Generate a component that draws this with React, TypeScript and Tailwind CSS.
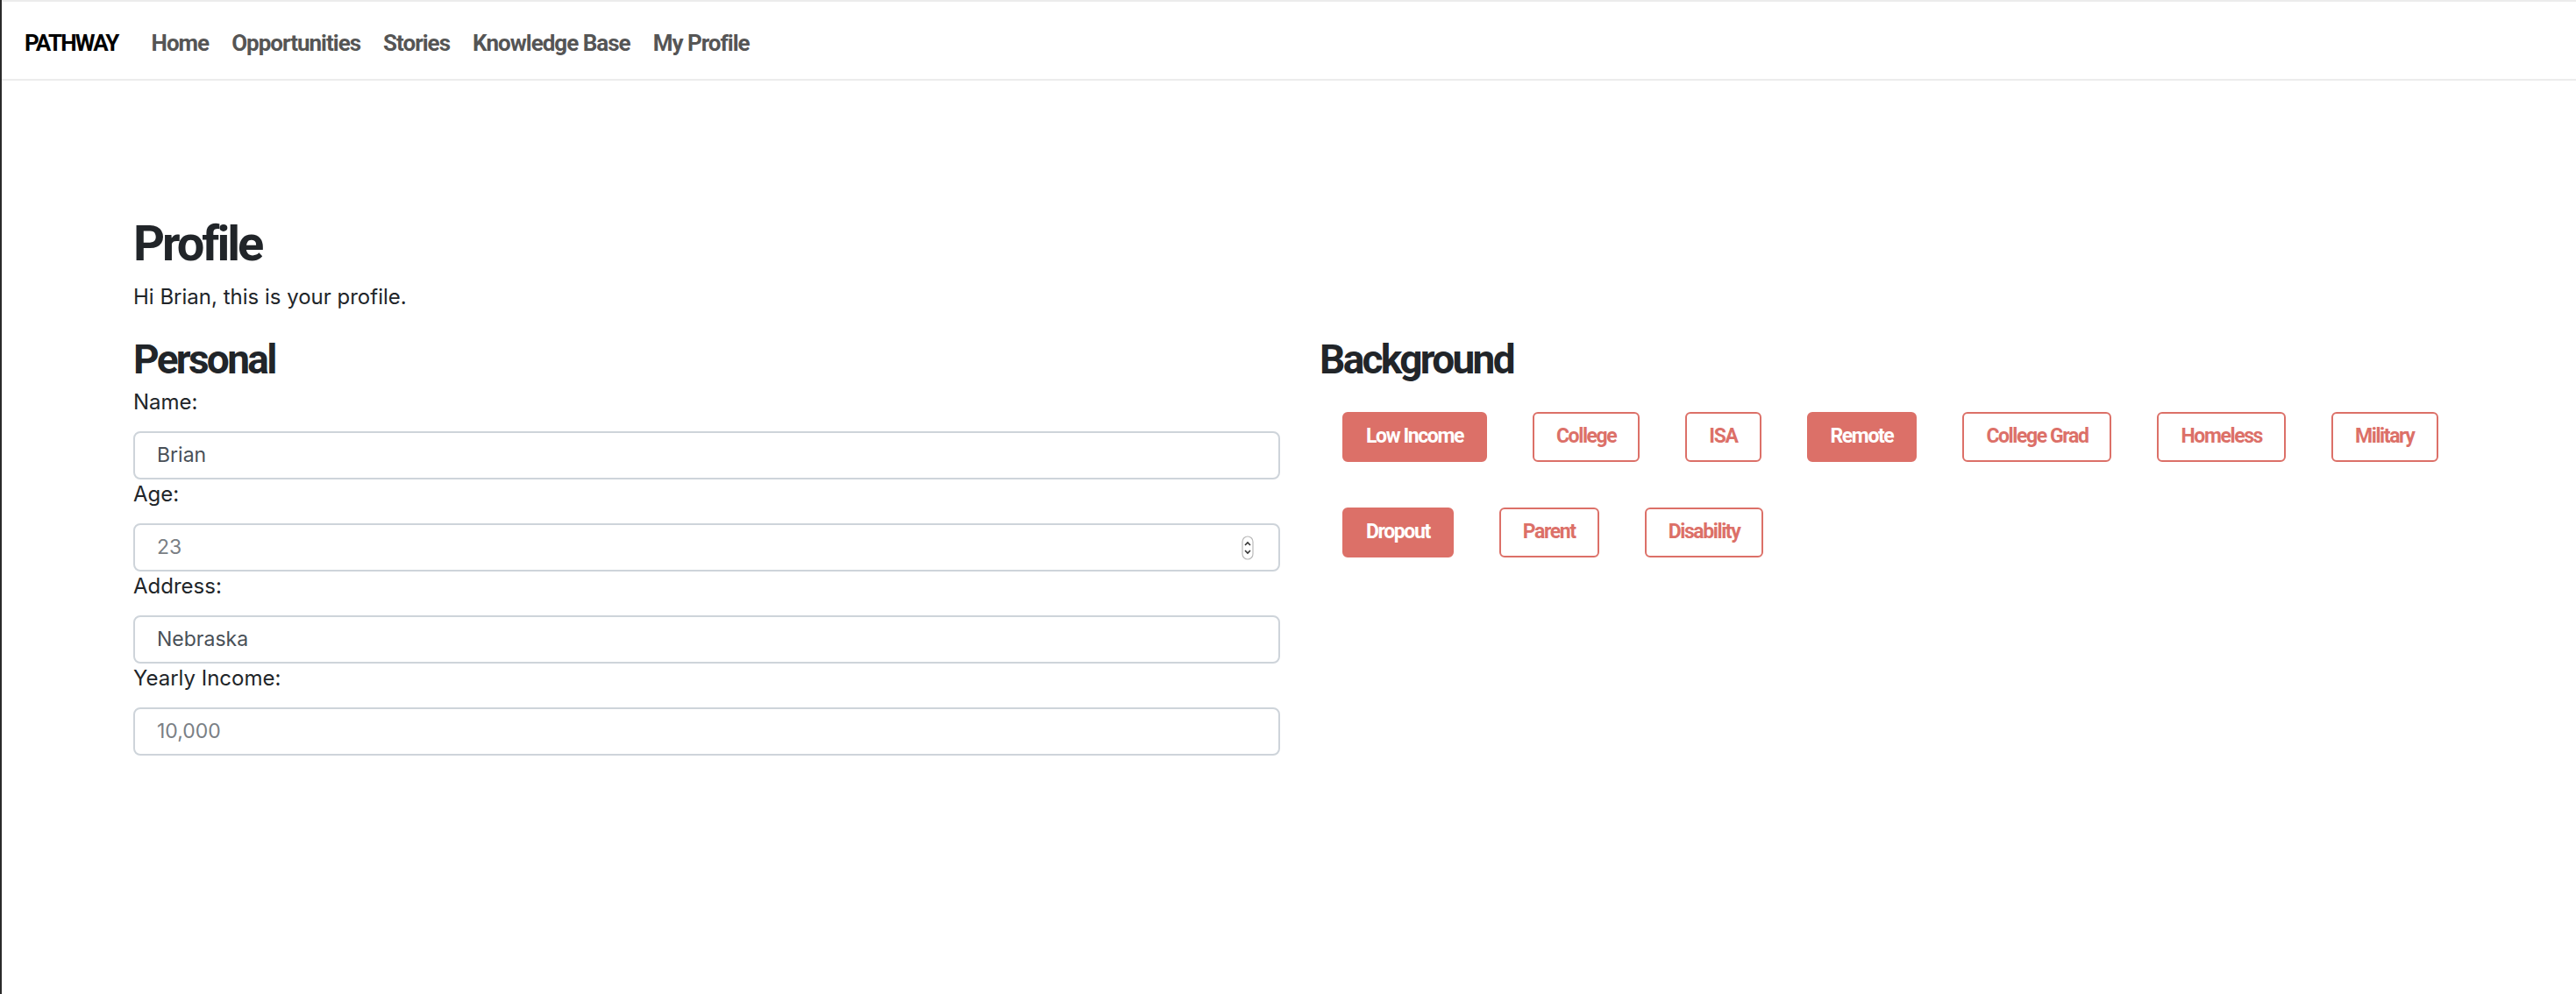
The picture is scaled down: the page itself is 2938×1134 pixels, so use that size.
import React from 'react';

const cond = "font-['Roboto','Liberation_Sans',sans-serif]";
const body = "font-['Inter','Liberation_Sans',sans-serif]";

const navLinks = ['Home', 'Opportunities', 'Stories', 'Knowledge Base', 'My Profile'];

const tags = [
  { label: 'Low Income', on: true },
  { label: 'College', on: false },
  { label: 'ISA', on: false },
  { label: 'Remote', on: true },
  { label: 'College Grad', on: false },
  { label: 'Homeless', on: false },
  { label: 'Military', on: false },
  { label: 'Dropout', on: true },
  { label: 'Parent', on: false },
  { label: 'Disability', on: false },
];

function Field(props: { label: string; value: string; muted?: boolean; spinner?: boolean }) {
  return (
    <div className="flex flex-col">
      <label className={`${body} text-[24px] text-[#212529] leading-[34px] mb-[16px]`}>{props.label}</label>
      <div className="h-[55px] rounded-[8px] border-2 border-[#ced4da] bg-white flex items-center pl-[25px] pr-[28px]">
        <span className={`${body} text-[23px] flex-1 ${props.muted ? 'text-[#7a7f85]' : 'text-[#495057]'}`}>{props.value}</span>
        {props.spinner && (
          <svg width="14" height="28" viewBox="0 0 14 28">
            <rect x="1" y="1" width="12" height="26" rx="6" fill="#fff" stroke="#b9b9b9" strokeWidth="1.2" />
            <path d="M4 11 L7 8 L10 11" fill="none" stroke="#333" strokeWidth="1.6" />
            <path d="M4 17 L7 20 L10 17" fill="none" stroke="#333" strokeWidth="1.6" />
          </svg>
        )}
      </div>
    </div>
  );
}

export default function App() {
  return (
    <div className="min-h-[1134px] bg-white border-l-2 border-[#2a2a2a]">
      <div className="h-[2px] bg-[#ececec]" />
      <nav className="h-[90px] border-b-2 border-[#ececec] flex items-center pt-[6px] pl-[26px] gap-[26px]">
        <span className={`${cond} text-[26px] font-bold tracking-[-1.8px] text-black mr-[12px]`}>PATHWAY</span>
        {navLinks.map((l) => (
          <a key={l} className={`${cond} text-[26px] font-bold tracking-[-1px] text-[#555555]`}>
            {l}
          </a>
        ))}
      </nav>

      <main className="pl-[150px] pr-[100px] pt-[154px]">
        <h1 className={`${cond} text-[56px] font-bold tracking-[-3px] text-[#212529] leading-[64px]`}>Profile</h1>
        <p className={`${body} text-[24px] text-[#212529] leading-[34px] mt-[12px]`}>Hi Brian, this is your profile.</p>

        <div className="grid grid-cols-[1308px_1fr] gap-[45px] mt-[27px]">
          <section>
            <h2 className={`${cond} text-[46px] font-bold tracking-[-2.7px] text-[#212529] leading-[54px]`}>Personal</h2>
            <div className="flex flex-col mt-[5px]">
              <Field label="Name:" value="Brian" />
              <Field label="Age:" value="23" muted spinner />
              <Field label="Address:" value="Nebraska" />
              <Field label="Yearly Income:" value="10,000" muted />
            </div>
          </section>

          <section>
            <h2 className={`${cond} text-[46px] font-bold tracking-[-2.7px] text-[#212529] leading-[54px]`}>Background</h2>
            <div className="flex flex-wrap mt-[7px]">
              {tags.map((t) => (
                <button
                  key={t.label}
                  className={`${cond} text-[23px] font-bold tracking-[-1.4px] h-[57px] px-[25px] m-[26px] rounded-[6px] border-2 border-[#dc7068] ${
                    t.on ? 'bg-[#dc7068] text-white' : 'bg-white text-[#dc7068]'
                  }`}
                >
                  {t.label}
                </button>
              ))}
            </div>
          </section>
        </div>
      </main>
    </div>
  );
}
